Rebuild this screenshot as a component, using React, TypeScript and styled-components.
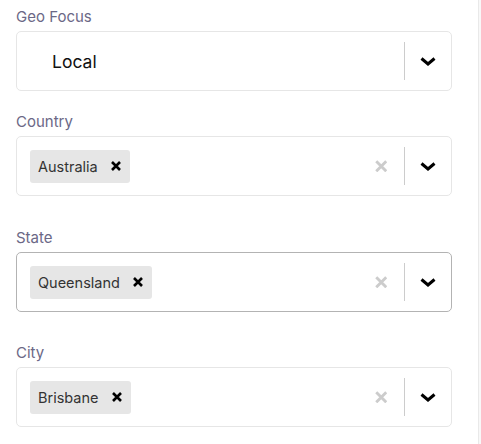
import React from "react";
import styled, { createGlobalStyle } from "styled-components";

const Global = createGlobalStyle`
  html, body { margin: 0; padding: 0; background: #fff; }
  body { font-family: Inter, "Noto Sans", sans-serif; }
`;

const Page = styled.div`
  display: flex;
  min-height: 100vh;
`;

const Main = styled.main`
  flex: 1;
  padding: 7px 26px 0 16px;
`;

const Gutter = styled.div`
  width: 2px;
  border-left: 1px solid #e9e9e9;
  background: #f8f8f8;
`;

const Field = styled.div<{ $gap: number }>`
  margin-bottom: ${(p) => p.$gap}px;
`;

const Label = styled.div`
  font-size: 15px;
  line-height: 20px;
  color: #6b6886;
  margin-bottom: 4px;
`;

const Control = styled.div<{ $active?: boolean }>`
  display: flex;
  align-items: center;
  height: 60px;
  box-sizing: border-box;
  border: 1px solid ${(p) => (p.$active ? "#b3b3b3" : "#e6e6e6")};
  border-radius: 5px;
  background: #fff;
`;

const ValueArea = styled.div<{ $single?: boolean }>`
  flex: 1;
  display: flex;
  align-items: center;
  padding-left: ${(p) => (p.$single ? "35px" : "13px")};
`;

const SingleValue = styled.span`
  font-size: 17.5px;
  color: #111;
`;

const Chip = styled.div`
  display: flex;
  align-items: center;
  height: 33px;
  padding: 0 9px 0 8px;
  background: #e6e6e6;
  border-radius: 3px;
  font-size: 14.5px;
  color: #333;
`;

const ChipRemove = styled.span`
  display: flex;
  margin-left: 13px;
`;

const Indicator = styled.div`
  width: 46px;
  display: flex;
  align-items: center;
  justify-content: center;
`;

const Separator = styled.span`
  align-self: stretch;
  width: 1px;
  margin: 10px 0;
  background: #cccccc;
`;

const XIcon = ({ size, color, w }: { size: number; color: string; w: number }) => (
  <svg width={size} height={size} viewBox="0 0 10 10">
    <path d="M1 1 L9 9 M9 1 L1 9" stroke={color} strokeWidth={w} fill="none" />
  </svg>
);

const Chevron = () => (
  <svg width="16" height="9" viewBox="0 0 16 9">
    <path d="M1.5 1.5 L8 7 L14.5 1.5" stroke="#000" strokeWidth="3" fill="none" />
  </svg>
);

type SelectProps = { label: string; value: string; multi?: boolean; active?: boolean; gap: number };

const Select = ({ label, value, multi, active, gap }: SelectProps) => (
  <Field $gap={gap}>
    <Label>{label}</Label>
    <Control $active={active}>
      <ValueArea $single={!multi}>
        {multi ? (
          <Chip>
            {value}
            <ChipRemove>
              <XIcon size={10} color="#000" w={2.6} />
            </ChipRemove>
          </Chip>
        ) : (
          <SingleValue>{value}</SingleValue>
        )}
      </ValueArea>
      {multi && (
        <Indicator>
          <XIcon size={12.5} color="#cccccc" w={2.3} />
        </Indicator>
      )}
      <Separator />
      <Indicator>
        <Chevron />
      </Indicator>
    </Control>
  </Field>
);

export default function App() {
  return (
    <>
      <Global />
      <Page>
        <Main>
          <Select label="Geo Focus" value="Local" gap={21} />
          <Select label="Country" value="Australia" multi gap={32} />
          <Select label="State" value="Queensland" multi active gap={31} />
          <Select label="City" value="Brisbane" multi gap={0} />
        </Main>
        <Gutter />
      </Page>
    </>
  );
}
